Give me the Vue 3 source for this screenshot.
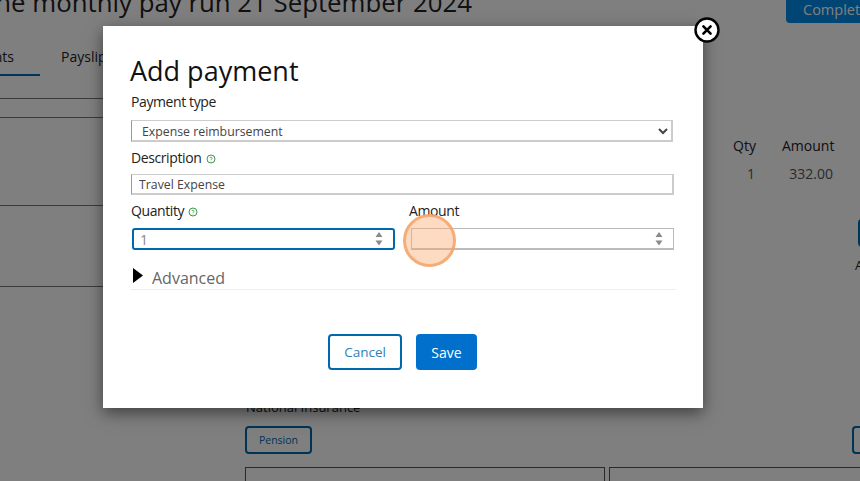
<template>
  <div class="screen">
    <!-- page behind the dialog -->
    <div class="page">
      <header class="top">
        <h1 class="page-title">The monthly pay run 21 September 2024</h1>
        <button class="complete">Complete</button>
      </header>
      <nav class="tabs">
        <span class="tab active">Payments</span>
        <span class="tab">Payslips</span>
      </nav>
      <div class="body">
        <div class="rules">
          <hr v-for="gap in ruleGaps" :key="gap" class="rule" :style="{ marginTop: gap + 'px' }" />
        </div>
        <div class="main">
          <div class="row head">
            <span class="qty">Qty</span>
            <span class="amount">Amount</span>
          </div>
          <div class="row cells">
            <span class="qty">1</span>
            <span class="amount">332.00</span>
          </div>
          <div class="side-action">
            <span class="side-btn"></span>
            <span class="side-label">Add</span>
          </div>
          <p class="ni">National Insurance</p>
          <div class="pension-row">
            <button class="pension">Pension</button>
            <span class="side-btn small"></span>
          </div>
          <div class="boxes">
            <div class="box"></div>
            <div class="box"></div>
          </div>
        </div>
      </div>
    </div>

    <div class="overlay"></div>

    <!-- dialog -->
    <div class="modal">
      <button class="close" aria-label="Close">
        <svg width="26" height="26" viewBox="0 0 26 26">
          <circle cx="13" cy="13" r="11.5" fill="#fff" stroke="#000" stroke-width="2.4" />
          <path d="M9.4 9.4 16.6 16.6M16.6 9.4 9.4 16.6" stroke="#000" stroke-width="2.6" stroke-linecap="round" />
        </svg>
      </button>
      <h2 class="title">Add payment</h2>

      <label class="label first">Payment type</label>
      <select class="field select">
        <option>Expense reimbursement</option>
      </select>

      <label class="label desc">Description
        <svg class="help" width="10" height="10" viewBox="0 0 10 10">
          <circle cx="5" cy="5" r="4" fill="none" stroke="#3f9a4a" stroke-width="1" />
          <path d="M3.8 4.1C3.9 2.9 6.2 2.9 6.2 4.1 6.2 5 5 5 5 5.9M5 6.8V7.5" fill="none" stroke="#3f9a4a" stroke-width=".8" />
        </svg>
      </label>
      <input class="field text" value="Travel Expense" />

      <div class="pair">
        <div class="col">
          <label class="label">Quantity
            <svg class="help" width="10" height="10" viewBox="0 0 10 10">
              <circle cx="5" cy="5" r="4" fill="none" stroke="#3f9a4a" stroke-width="1" />
              <path d="M3.8 4.1C3.9 2.9 6.2 2.9 6.2 4.1 6.2 5 5 5 5 5.9M5 6.8V7.5" fill="none" stroke="#3f9a4a" stroke-width=".8" />
            </svg>
          </label>
          <div class="num focused">
            <span class="num-value">1</span>
            <svg class="spin" width="8" height="14" viewBox="0 0 8 14">
              <path d="M4 0 7.500 5H.5ZM.5 8.500H7.500L4 13.500Z" fill="#8a8a8a" />
            </svg>
          </div>
        </div>
        <div class="col amount-col">
          <label class="label">Amount</label>
          <div class="num">
            <span class="num-value"></span>
            <svg class="spin" width="8" height="14" viewBox="0 0 8 14">
              <path d="M4 0 7.500 5H.5ZM.5 8.500H7.500L4 13.500Z" fill="#8a8a8a" />
            </svg>
          </div>
          <span class="highlight"></span>
        </div>
      </div>

      <div class="advanced">
        <svg width="10" height="15" viewBox="0 0 10 15"><path d="M0 0 10 7.500 0 15Z" fill="#000" /></svg>
        <span>Advanced</span>
      </div>

      <div class="actions">
        <button class="btn cancel">Cancel</button>
        <button class="btn save">Save</button>
      </div>
    </div>
  </div>
</template>

<script setup>
// y gaps between the rules on the left of the page
const ruleGaps = [24, 18, 87, 80]
</script>

<style>
html, body {
  margin: 0;
  background: #fff;
}
</style>

<style scoped>
.screen {
  position: relative;
  width: 860px;
  height: 481px;
  overflow: hidden;
  font-family: "Open Sans", "Noto Sans", sans-serif;
  color: #222;
}

.top {
  height: 23px;
  display: flex;
  justify-content: space-between;
}

.page-title {
  width: 472px;
  margin: -14px 0 0;
  display: flex;
  justify-content: flex-end;
  white-space: nowrap;
  font-size: 25.800px;
  line-height: 32px;
  font-weight: 400;
  color: #222;
}

.complete {
  width: 100px;
  margin-right: -26px;
  padding: 0 0 11px 17px;
  text-align: left;
  border: 0;
  border-radius: 0 0 4px 4px;
  background: #008ae6;
  color: #fff;
  font: 14.500px "Open Sans", sans-serif;
}

.tabs {
  height: 51px;
  width: 103px;
  display: flex;
  justify-content: flex-end;
  white-space: nowrap;
  font-size: 14px;
}

.tab {
  flex: none;
  overflow: hidden;
  padding-top: 24px;
  width: 42px;
}

.tab.active {
  width: 14px;
  height: 27px;
  direction: rtl;
  padding-right: 26px;
  margin-right: 21px;
  border-bottom: 2px solid #006bb5;
}

.body {
  display: grid;
  grid-template-columns: 245px 615px;
}

.rule {
  width: 103px;
  margin: 0;
  border: 0;
  border-top: 1px solid #777;
  height: 0;
}

.row {
  display: flex;
  justify-content: flex-end;
  padding-right: 27px;
  font-size: 14px;
}

.head {
  margin-top: 62px;
  line-height: 20px;
}

.cells {
  margin-top: 8px;
  line-height: 20px;
  color: #555;
}

.qty {
  width: 22px;
  text-align: right;
}

.amount {
  width: 51px;
  margin-left: 27px;
  text-align: right;
}

.side-action {
  margin: 35px 0 0 613px;
  display: flex;
  flex-direction: column;
  height: 189px;
}

.side-btn {
  display: block;
  width: 40px;
  height: 24px;
  border: 2px solid #0068ad;
  border-radius: 4px;
  flex: none;
}

.side-label {
  font-size: 13px;
  margin: 9px 0 0 -3px;
  line-height: 18px;
}

.ni {
  margin: -10px 0 0 1px;
  font-size: 13px;
  line-height: 18px;
  height: 28px;
}

.pension-row {
  display: flex;
  justify-content: space-between;
}

.pension {
  width: 67px;
  height: 28px;
  padding: 0;
  border: 2px solid #0068ad;
  border-radius: 4px;
  background: #fff;
  color: #0068ad;
  font: 10.500px "Open Sans", sans-serif;
}

.side-btn.small {
  width: 30px;
  margin-right: -26px;
}

.boxes {
  margin-top: 13px;
  display: flex;
  gap: 4px;
}

.box {
  flex: none;
  width: 358px;
  height: 60px;
  border: 1px solid #555;
}

.box + .box {
  width: 300px;
}

.overlay {
  position: absolute;
  inset: 0;
  background: rgba(0, 0, 0, 0.5);
}

.modal {
  position: absolute;
  left: 103px;
  top: 26px;
  width: 600px;
  height: 382px;
  box-sizing: border-box;
  padding: 27px 27px 0 28px;
  background: #fff;
  box-shadow: 0 5px 15px rgba(0, 0, 0, 0.5);
}

.close {
  position: absolute;
  right: -17px;
  top: -9px;
  width: 26px;
  height: 26px;
  padding: 0;
  border: 0;
  background: none;
}

.close svg {
  display: block;
}

.title {
  margin: 0 0 0 -1px;
  font-size: 27px;
  line-height: 36px;
  font-weight: 400;
  color: #111;
}

.label {
  display: block;
  font-size: 14px;
  line-height: 20px;
  color: #222;
  letter-spacing: -0.4px;
}

.label.first {
  margin-top: 3px;
}

.label.desc {
  margin-top: 6px;
}

.help {
  vertical-align: -1px;
  margin-left: 1px;
}

.field {
  display: block;
  box-sizing: border-box;
  font: 12.300px "Open Sans", sans-serif;
  color: #444;
  background: #fff;
  border-style: solid;
  border-width: 1px 2px 2px 1px;
  border-color: #ccc #ccc #ccc #999;
  border-radius: 0;
  outline: 0;
}

.select {
  width: 542px;
  height: 22px;
  margin-top: 8px;
  padding: 1px 0 0 6px;
}

.text {
  width: 543px;
  height: 21px;
  margin-top: 6px;
  padding: 1px 7px 0;
}

.pair {
  display: flex;
  width: 543px;
  margin-top: 6px;
}

.col {
  position: relative;
  flex: none;
  width: 278px;
}

.amount-col {
  width: 265px;
}

.num {
  position: relative;
  box-sizing: border-box;
  width: 263px;
  height: 22px;
  margin: 7px 0 0 1px;
  border: 1px solid #bbb;
  border-bottom-width: 2px;
  display: flex;
  align-items: center;
  padding-left: 7px;
  font-size: 14px;
  color: #888;
}

.amount-col .num {
  margin-left: 2px;
}

.num.focused {
  border: 2px solid #0068ad;
  border-radius: 3px;
  padding-left: 6px;
}

.num-value {
  flex: 1;
}

.spin {
  margin-right: 10px;
}

.highlight {
  position: absolute;
  left: -6px;
  top: 13px;
  width: 47px;
  height: 47px;
  border: 3px solid rgba(245, 165, 105, 0.85);
  border-radius: 50%;
  background: rgba(250, 170, 110, 0.42);
}

.advanced {
  display: flex;
  align-items: center;
  gap: 9px;
  width: 545px;
  height: 40px;
  padding: 0 0 0 2px;
  box-sizing: border-box;
  border-bottom: 1px solid #eee;
  color: #666;
  font-size: 16px;
}

.advanced span {
  padding-top: 17px;
}

.advanced svg {
  margin-top: 11px;
}

.actions {
  display: flex;
  justify-content: center;
  gap: 14px;
  margin-top: 44px;
  padding-right: 2px;
}

.btn {
  height: 36px;
  box-sizing: border-box;
  border-radius: 4px;
  font: 14px "Open Sans", sans-serif;
  padding: 0;
}

.cancel {
  width: 74px;
  border: 2px solid #0068ad;
  background: #fff;
  color: #2f7fb8;
  font-size: 13.500px;
}

.save {
  width: 61px;
  border: 0;
  background: #0070cc;
  color: #fff;
}
</style>
